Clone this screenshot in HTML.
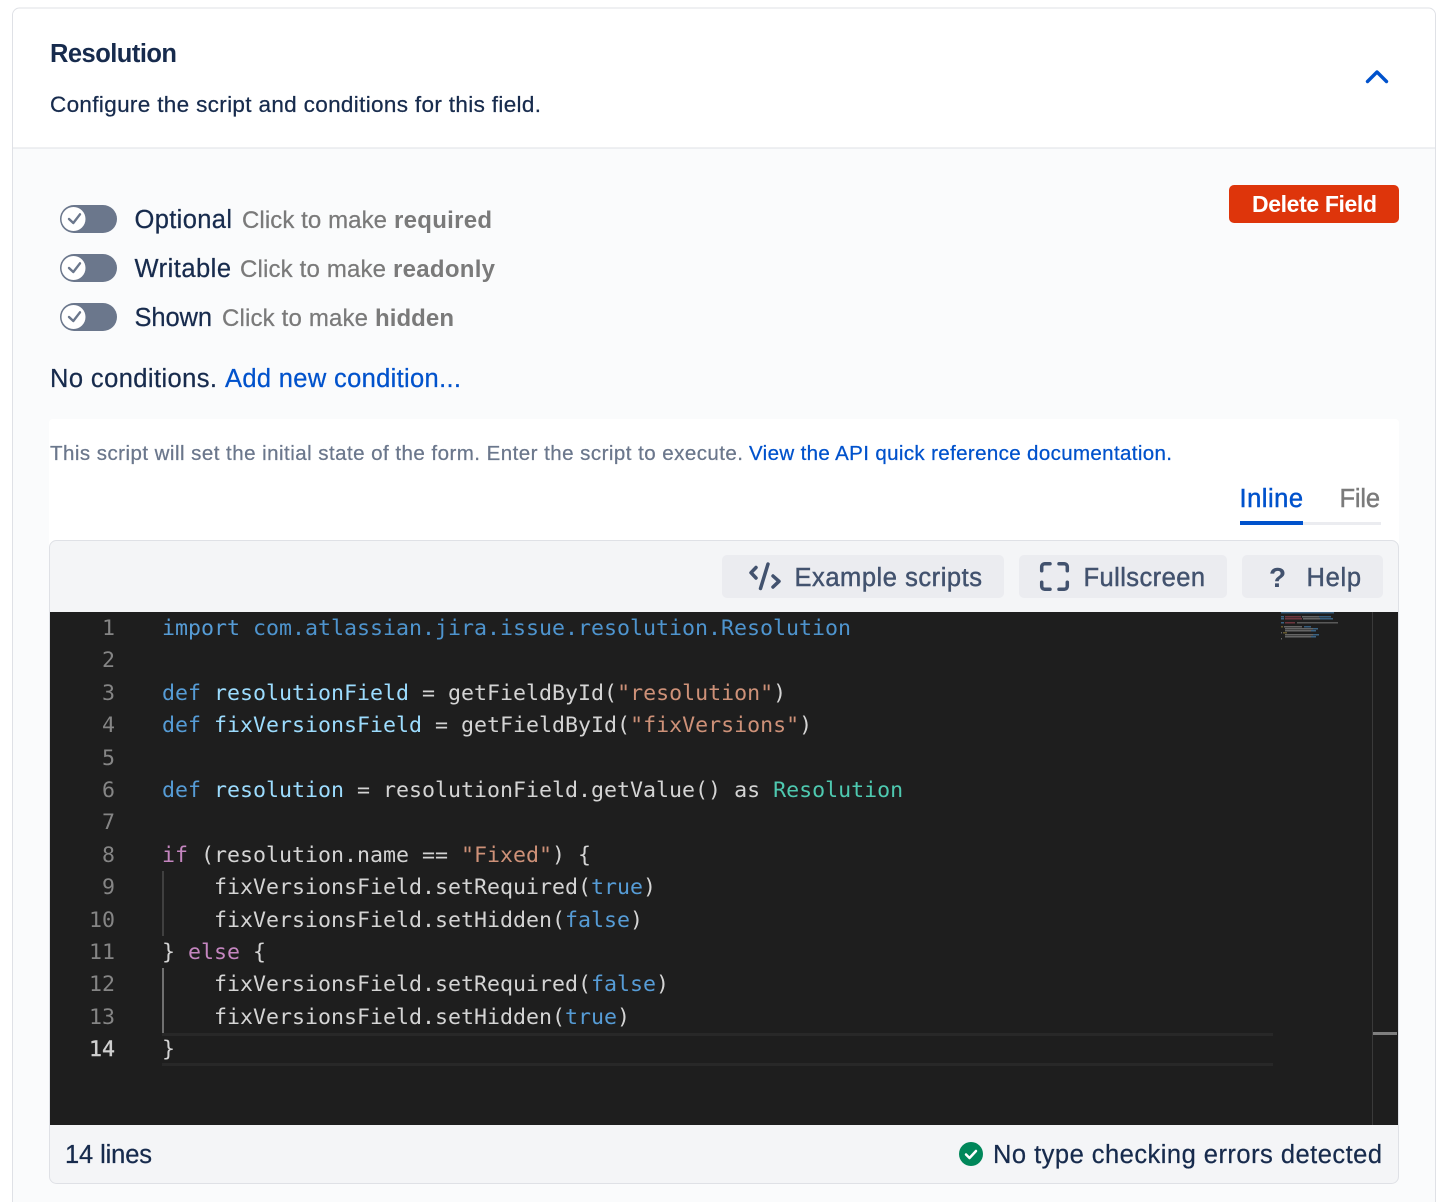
<!DOCTYPE html>
<html><head><meta charset="utf-8"><style>
html,body{margin:0;padding:0;background:#fff;width:1444px;height:1202px;overflow:hidden}
svg{display:block}
text{font-family:"Liberation Sans",Arial,sans-serif;color:#172B4D;fill:currentColor;stroke:currentColor;stroke-width:.25px}
.m{font-family:"DejaVu Sans Mono",monospace;font-size:21.6px;fill:#D4D4D4;stroke:none;white-space:pre}
.n{font-family:"DejaVu Sans Mono",monospace;font-size:21.6px;fill:#858585;stroke:none;text-anchor:end}
.k{fill:#569CD6}.v{fill:#9CDCFE}.s{fill:#CE9178}.c{fill:#4EC9B0}.p{fill:#C586C0}.b{fill:#4E94CE}
.g{color:#7A7A7A;font-size:24px}
.l{font-size:25.5px}
.bt{font-size:25.5px;color:#42526E}
.w{stroke-width:0}
</style></head><body>
<svg width="1444" height="1202" viewBox="0 0 1444 1202" xmlns="http://www.w3.org/2000/svg">
<rect width="1444" height="1202" fill="#fff"/>
<path d="M12.5 1202V15a7 7 0 0 1 7-7H1428.500a7 7 0 0 1 7 7V1202" fill="#FAFBFC" stroke="#DFE1E6"/>
<path d="M13 148V15.500a7 7 0 0 1 7-7H1428a7 7 0 0 1 7 7V148z" fill="#fff"/>
<rect x="13" y="147.500" width="1422" height="1" fill="#DFE1E6"/>
<text class="w" x="50" y="62" font-size="25.500" font-weight="bold" textLength="127">Resolution</text>
<text x="50" y="112" font-size="22.500" textLength="491">Configure the script and conditions for this field.</text>
<path d="M1367.500 81.500l9.500-9.500 9.500 9.500" fill="none" stroke="#0052CC" stroke-width="3.400" stroke-linecap="round" stroke-linejoin="round"/>

<rect x="1229" y="185" width="170" height="38" rx="5" fill="#DE350B"/>
<text class="w" x="1252" y="212" font-size="23" font-weight="bold" style="color:#fff" textLength="125">Delete Field</text>

<g id="t1"><rect x="60" y="205" width="57" height="28" rx="14" fill="#6B778C"/><circle cx="73.500" cy="219" r="12" fill="#fff"/><path d="M69 219l4.300 4 6.700-8.700" fill="none" stroke="#6B778C" stroke-width="2.400" stroke-linecap="round" stroke-linejoin="round"/></g>
<use href="#t1" y="49"/><use href="#t1" y="98"/>

<text class="l" x="134.500" y="228" textLength="97.500">Optional</text>
<text class="g" x="242" y="228" textLength="145">Click to make</text>
<text class="g w" x="394" y="228" font-weight="bold" textLength="98">required</text>
<text class="l" x="134.500" y="277" textLength="96.500">Writable</text>
<text class="g" x="240" y="277" textLength="146">Click to make</text>
<text class="g w" x="393" y="277" font-weight="bold" textLength="102">readonly</text>
<text class="l" x="134.500" y="326" textLength="77.500">Shown</text>
<text class="g" x="222" y="326" textLength="146">Click to make</text>
<text class="g w" x="375" y="326" font-weight="bold" textLength="79">hidden</text>

<text class="l" x="50" y="387" textLength="167">No conditions.</text>
<text class="l" x="225" y="387" style="color:#0052CC" textLength="236">Add new condition...</text>

<rect x="49" y="419" width="1350" height="130" rx="4" fill="#fff"/>
<text x="50" y="460" font-size="20.500" style="color:#6B778C" textLength="693">This script will set the initial state of the form. Enter the script to execute.</text>
<text x="749" y="460" font-size="20.500" style="color:#0052CC" textLength="423">View the API quick reference documentation.</text>
<text x="1239.500" y="507" font-size="25.500" style="color:#0052CC;stroke-width:.45px" textLength="63.500">Inline</text>
<text x="1339.500" y="507" font-size="25.500" style="color:#7A7A7A;stroke-width:.45px" textLength="40.500">File</text>
<rect x="1240" y="522" width="141" height="3" fill="#EBECF0"/>
<rect x="1240" y="521" width="63" height="4" fill="#0052CC"/>

<rect x="49.500" y="540.500" width="1349" height="643" rx="7" fill="#F4F5F7" stroke="#DFE1E6"/>
<rect x="722" y="555" width="282" height="43" rx="5" fill="#EBECF0"/>
<rect x="1019" y="555" width="208" height="43" rx="5" fill="#EBECF0"/>
<rect x="1242" y="555" width="141" height="43" rx="5" fill="#EBECF0"/>
<g fill="none" stroke="#42526E" stroke-width="3.500" stroke-linecap="round" stroke-linejoin="round">
<path d="M756 567.500l-5 5.200 5 5.300M773 576l6 5.300-6 5.700M768 564l-7.500 24.500"/>
<path d="M1050 563.700h-5.300a3 3 0 0 0-3 3v4M1059 563.700h5.300a3 3 0 0 1 3 3v4M1050 589.300h-5.300a3 3 0 0 1-3-3v-4M1059 589.300h5.300a3 3 0 0 0 3-3v-4"/>
</g>
<text class="bt" x="794.500" y="586" textLength="187.500" style="stroke-width:.45px">Example scripts</text>
<text class="bt" x="1083.500" y="586" textLength="121.500" style="stroke-width:.45px">Fullscreen</text>
<text class="w" x="1269" y="587" font-size="28" font-weight="bold" style="color:#42526E">?</text>
<text class="bt" x="1306.500" y="586" textLength="54.500" style="stroke-width:.45px">Help</text>

<rect x="50" y="612" width="1348" height="513" fill="#1E1E1E"/>
<rect x="1372" y="612" width="1" height="513" fill="#3A3A3A"/>
<rect x="1373" y="1032" width="24" height="3" fill="#7F7F7F"/>
<rect x="162" y="1033" width="1111" height="3" fill="#282828"/>
<rect x="162" y="1063" width="1111" height="3" fill="#282828"/>
<rect x="162" y="871" width="2" height="65" fill="#404040"/>
<rect x="162" y="968" width="2" height="65" fill="#707070"/>

<g opacity=".55">
<rect x="1281" y="612" width="53" height="1.500" fill="#4E94CE"/>
<rect x="1281" y="616" width="3" height="1.500" fill="#569CD6"/><rect x="1285" y="616" width="16" height="1.500" fill="#B04A5A"/><rect x="1302" y="616" width="17" height="1.500" fill="#A0A0A0"/><rect x="1319" y="616" width="12" height="1.500" fill="#4E94CE"/>
<rect x="1281" y="618" width="3" height="1.500" fill="#569CD6"/><rect x="1285" y="618" width="17" height="1.500" fill="#B04A5A"/><rect x="1303" y="618" width="17" height="1.500" fill="#A0A0A0"/><rect x="1320" y="618" width="13" height="1.500" fill="#4E94CE"/>
<rect x="1281" y="622" width="3" height="1.500" fill="#569CD6"/><rect x="1285" y="622" width="10" height="1.500" fill="#B04A5A"/><rect x="1297" y="622" width="41" height="1.500" fill="#8A8A8A"/>
<rect x="1281" y="626" width="2" height="1.500" fill="#A08A40"/><rect x="1284" y="626" width="18" height="1.500" fill="#A0A0A0"/><rect x="1304" y="626" width="7" height="1.500" fill="#4E94CE"/>
<rect x="1285" y="628" width="28" height="1.500" fill="#A0A0A0"/><rect x="1313" y="628" width="5" height="1.500" fill="#569CD6"/>
<rect x="1285" y="630" width="26" height="1.500" fill="#A0A0A0"/><rect x="1311" y="630" width="5" height="1.500" fill="#569CD6"/>
<rect x="1281" y="632" width="1" height="1.500" fill="#A0A0A0"/><rect x="1283" y="632" width="4" height="1.500" fill="#A08A40"/>
<rect x="1285" y="634" width="28" height="1.500" fill="#A0A0A0"/><rect x="1313" y="634" width="6" height="1.500" fill="#569CD6"/>
<rect x="1285" y="636" width="26" height="1.500" fill="#A0A0A0"/><rect x="1311" y="636" width="5" height="1.500" fill="#569CD6"/>
<rect x="1281" y="638" width="1" height="1.500" fill="#A0A0A0"/>
</g>

<text class="n" x="115" y="635">1</text>
<text class="n" x="115" y="667">2</text>
<text class="n" x="115" y="700">3</text>
<text class="n" x="115" y="732">4</text>
<text class="n" x="115" y="765">5</text>
<text class="n" x="115" y="797">6</text>
<text class="n" x="115" y="829">7</text>
<text class="n" x="115" y="862">8</text>
<text class="n" x="115" y="894">9</text>
<text class="n" x="115" y="927">10</text>
<text class="n" x="115" y="959">11</text>
<text class="n" x="115" y="991">12</text>
<text class="n" x="115" y="1024">13</text>
<text class="n" x="115" y="1056" style="fill:#D0D0D0;stroke:#D0D0D0;stroke-width:.4px">14</text>

<text class="m" x="162" y="635" xml:space="preserve"><tspan class="k">import</tspan> <tspan class="b">com.atlassian.jira.issue.resolution.Resolution</tspan></text>
<text class="m" x="162" y="700" xml:space="preserve"><tspan class="k">def</tspan> <tspan class="v">resolutionField</tspan> = getFieldById(<tspan class="s">"resolution"</tspan>)</text>
<text class="m" x="162" y="732" xml:space="preserve"><tspan class="k">def</tspan> <tspan class="v">fixVersionsField</tspan> = getFieldById(<tspan class="s">"fixVersions"</tspan>)</text>
<text class="m" x="162" y="797" xml:space="preserve"><tspan class="k">def</tspan> <tspan class="v">resolution</tspan> = resolutionField.getValue() as <tspan class="c">Resolution</tspan></text>
<text class="m" x="162" y="862" xml:space="preserve"><tspan class="p">if</tspan> (resolution.name == <tspan class="s">"Fixed"</tspan>) {</text>
<text class="m" x="214" y="894" xml:space="preserve">fixVersionsField.setRequired(<tspan class="k">true</tspan>)</text>
<text class="m" x="214" y="927" xml:space="preserve">fixVersionsField.setHidden(<tspan class="k">false</tspan>)</text>
<text class="m" x="162" y="959" xml:space="preserve">} <tspan class="p">else</tspan> {</text>
<text class="m" x="214" y="991" xml:space="preserve">fixVersionsField.setRequired(<tspan class="k">false</tspan>)</text>
<text class="m" x="214" y="1024" xml:space="preserve">fixVersionsField.setHidden(<tspan class="k">true</tspan>)</text>
<text class="m" x="162" y="1056" xml:space="preserve">}</text>

<text class="l" x="65" y="1163" textLength="87">14 lines</text>
<circle cx="971" cy="1154" r="12" fill="#00875A"/>
<path d="M966 1154.500l3.500 3.500 6.500-7" fill="none" stroke="#fff" stroke-width="2.500" stroke-linecap="round" stroke-linejoin="round"/>
<text class="l" x="993" y="1163" textLength="389">No type checking errors detected</text>
</svg>
</body></html>
